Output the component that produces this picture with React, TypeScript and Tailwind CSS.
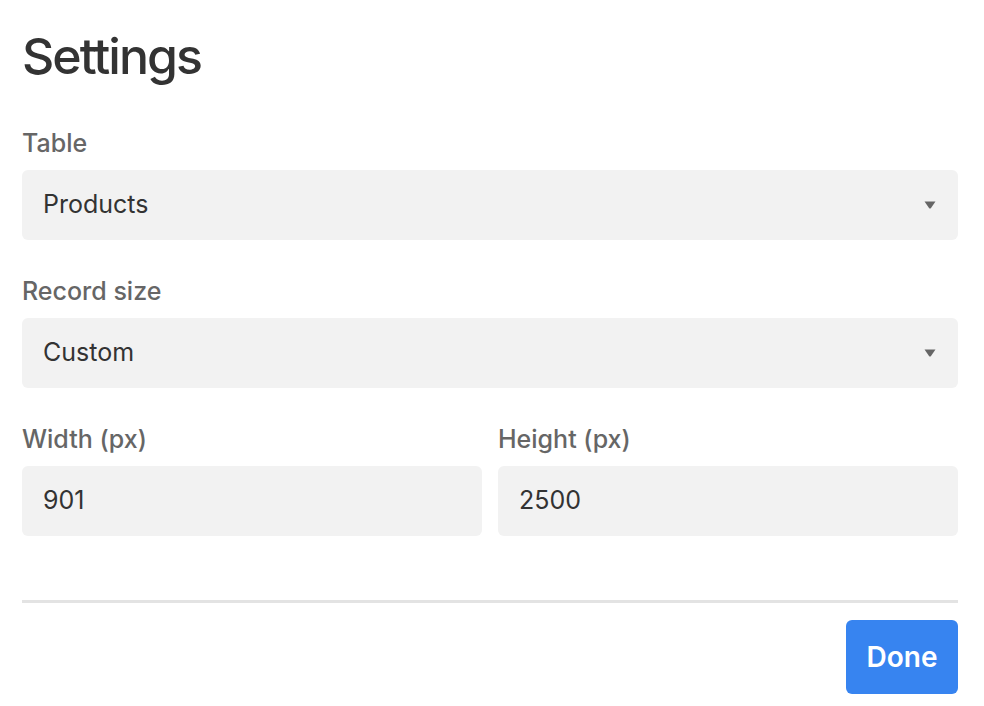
const font = { fontFamily: 'Inter, "Noto Sans", sans-serif' };

function Caret() {
  return (
    <svg width="12" height="8" viewBox="0 0 12 8" className="shrink-0">
      <path d="M0.5 0.5 H11.5 L6.8 7.2 Q6 8 5.2 7.2 Z" fill="#666666" />
    </svg>
  );
}

function Label({ children }: { children: React.ReactNode }) {
  return <div className="h-[32px] text-[25px] leading-[32px] font-medium text-[#666666]">{children}</div>;
}

function SelectBox({ value }: { value: string }) {
  return (
    <div className="mt-[11px] flex h-[70px] items-center justify-between rounded-[6px] bg-[#f2f2f2] pl-[21px] pr-[22px]">
      <span className="text-[25px] text-[#333333]">{value}</span>
      <Caret />
    </div>
  );
}

function InputBox({ value }: { value: string }) {
  return (
    <div className="mt-[11px] flex h-[70px] items-center rounded-[6px] bg-[#f2f2f2] pl-[21px]">
      <span className="text-[25px] text-[#333333]">{value}</span>
    </div>
  );
}

export default function App() {
  return (
    <div style={font} className="flex h-[706px] w-[984px] flex-col bg-white pl-[22px] pr-[26px] pt-[25px]">
      <h1 className="h-[63px] text-[50px] leading-[63px] font-medium tracking-[-2px] text-[#333333]">Settings</h1>

      <div className="mt-[39px]">
        <Label>Table</Label>
        <SelectBox value="Products" />
      </div>

      <div className="mt-[35px]">
        <Label>Record size</Label>
        <SelectBox value="Custom" />
      </div>

      <div className="mt-[35px] grid grid-cols-2 gap-[16px]">
        <div>
          <Label>Width (px)</Label>
          <InputBox value="901" />
        </div>
        <div>
          <Label>Height (px)</Label>
          <InputBox value="2500" />
        </div>
      </div>

      <div className="mt-[64px] h-[3px] bg-[#e3e3e3]" />

      <div className="mt-[17px] flex justify-end">
        <button className="h-[74px] w-[112px] rounded-[6px] bg-[#3784f0] text-[28px] font-semibold text-white">
          Done
        </button>
      </div>
    </div>
  );
}
